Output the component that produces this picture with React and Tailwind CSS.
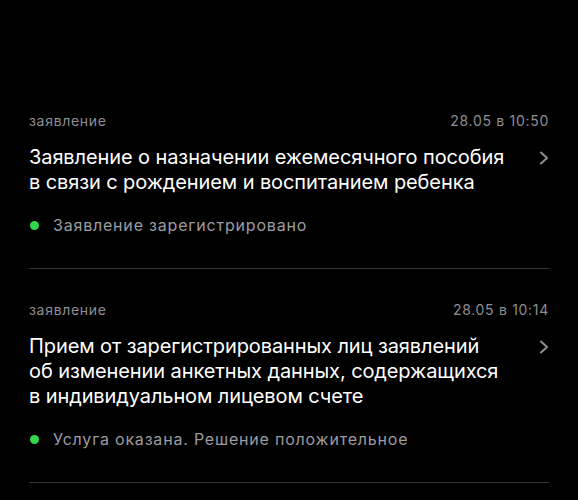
const items = [
  {
    kind: "заявление",
    date: "28.05 в 10:50",
    title: ["Заявление о назначении ежемесячного пособия", "в связи с рождением и воспитанием ребенка"],
    status: "Заявление зарегистрировано",
  },
  {
    kind: "заявление",
    date: "28.05 в 10:14",
    title: [
      "Прием от зарегистрированных лиц заявлений",
      "об изменении анкетных данных, содержащихся",
      "в индивидуальном лицевом счете",
    ],
    status: "Услуга оказана. Решение положительное",
  },
];

function Chevron() {
  return (
    <svg width="12" height="16" viewBox="0 0 12 16" fill="none" className="mt-[5px] mr-[-1px] shrink-0">
      <polyline points="3,2.5 9,8 3,13.5" stroke="#8e8e93" strokeWidth="2" strokeLinecap="round" strokeLinejoin="round" />
    </svg>
  );
}

export default function App() {
  return (
    <div
      className="min-h-[500px] w-[578px] bg-black pl-[29px] pr-[29px] pt-[112px]"
      style={{ fontFamily: "Inter, 'Noto Sans', sans-serif" }}
    >
      {items.map((it, i) => (
        <div key={i} className="border-b border-[#38383a] pb-[33px] mb-[32px]">
          <div className="flex justify-between text-[14px] leading-[18px] tracking-[0.7px] text-[#8e8e93]">
            <span>{it.kind}</span>
            <span>{it.date}</span>
          </div>
          <div className="mt-[15px] flex justify-between">
            <div className="text-[20px] leading-[25px] tracking-[-0.1px] text-white">
              {it.title.map((l, j) => (
                <div key={j}>{l}</div>
              ))}
            </div>
            <Chevron />
          </div>
          <div className="mt-[20px] flex items-center gap-[14px] text-[16px] leading-5 tracking-[0.8px] text-[#9c9ca1]">
            <span className="ml-[1px] h-[9px] w-[9px] rounded-full bg-[#32d74b]" />
            <span>{it.status}</span>
          </div>
        </div>
      ))}
    </div>
  );
}
